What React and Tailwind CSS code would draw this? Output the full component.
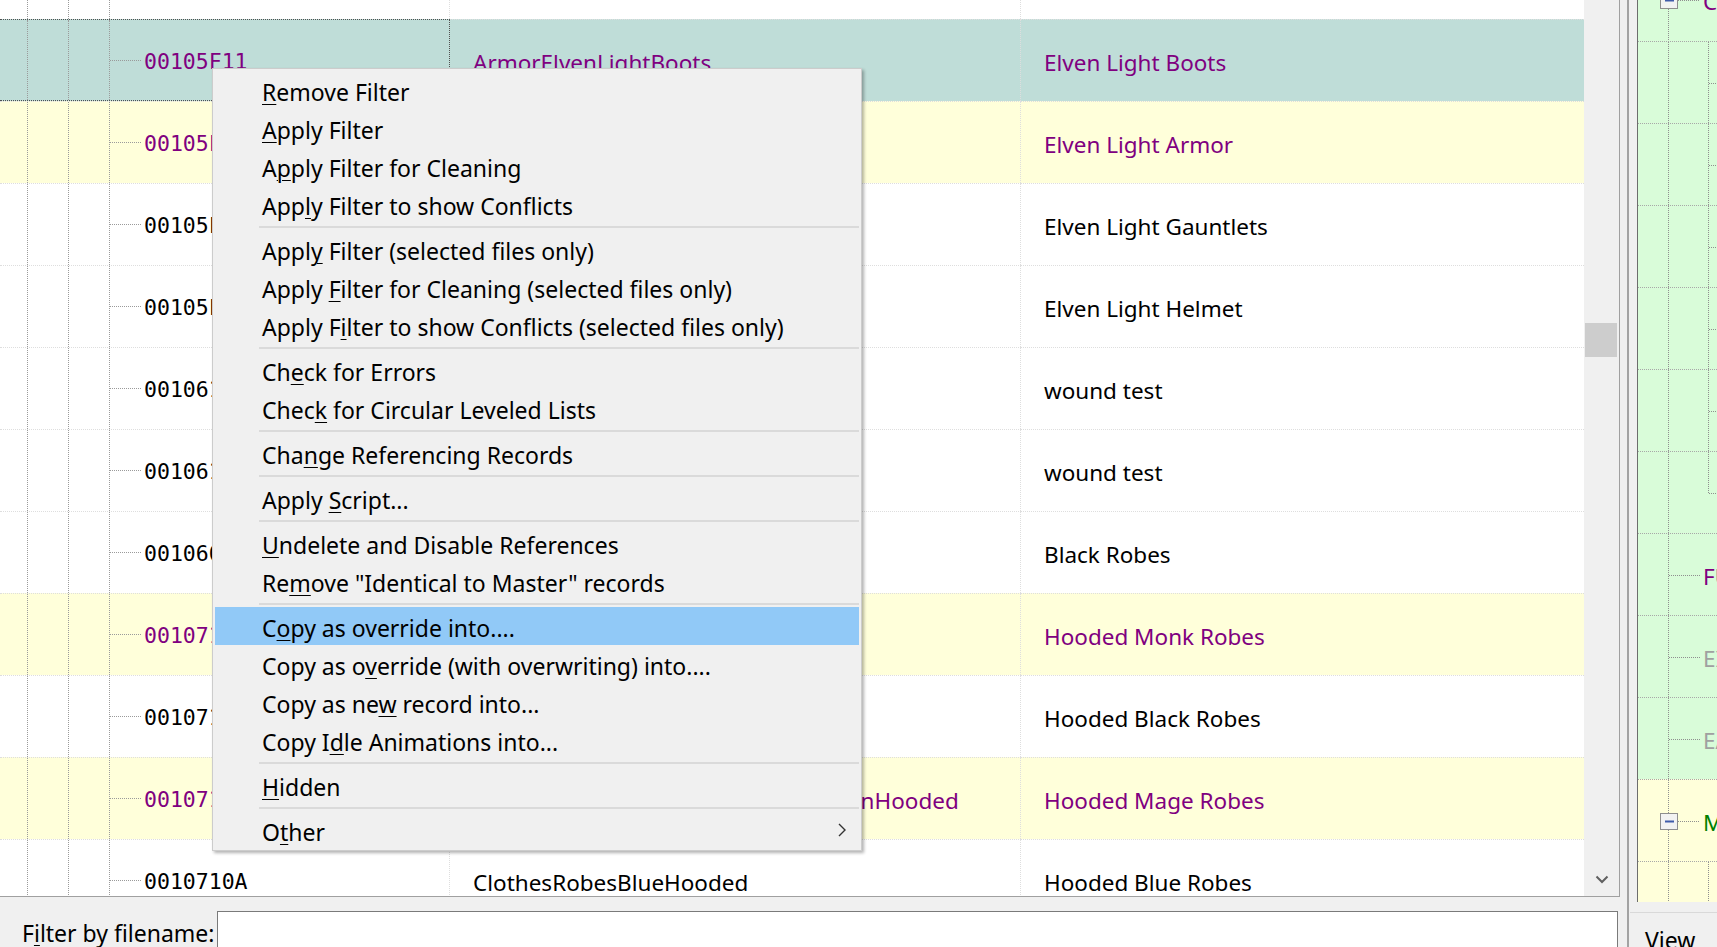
import React from "react";

// Records shown in the main list; the first row is scrolled partly out of view.
const records = [
  { id: "00105F10", edid: "ArmorElvenLightShield", name: "Elven Light Shield", kind: "white" },
  { id: "00105F11", edid: "ArmorElvenLightBoots", name: "Elven Light Boots", kind: "sel" },
  { id: "00105F12", edid: "ArmorElvenLightCuirass", name: "Elven Light Armor", kind: "yellow" },
  { id: "00105F13", edid: "ArmorElvenLightGauntlets", name: "Elven Light Gauntlets", kind: "white" },
  { id: "00105F14", edid: "ArmorElvenLightHelmet", name: "Elven Light Helmet", kind: "white" },
  { id: "0010613E", edid: "WoundTest01", name: "wound test", kind: "white" },
  { id: "0010613F", edid: "WoundTest02", name: "wound test", kind: "white" },
  { id: "001060E1", edid: "ClothesRobesBlack", name: "Black Robes", kind: "white" },
  { id: "00107106", edid: "ClothesMonkRobesHooded", name: "Hooded Monk Robes", kind: "yellow" },
  { id: "00107107", edid: "ClothesRobesBlackHooded", name: "Hooded Black Robes", kind: "white" },
  { id: "00107108", edid: "ClothesRobesMageApprenticeMaroonHooded", name: "Hooded Mage Robes", kind: "yellow" },
  { id: "0010710A", edid: "ClothesRobesBlueHooded", name: "Hooded Blue Robes", kind: "white" },
];

// Context menu entries: [label, index of access key, highlighted, has submenu]
const menu = [
  ["Remove Filter", 0],
  ["Apply Filter", 0],
  ["Apply Filter for Cleaning", 1],
  ["Apply Filter to show Conflicts", 3],
  "-",
  ["Apply Filter (selected files only)", 4],
  ["Apply Filter for Cleaning (selected files only)", 6],
  ["Apply Filter to show Conflicts (selected files only)", 7],
  "-",
  ["Check for Errors", 2],
  ["Check for Circular Leveled Lists", 4],
  "-",
  ["Change Referencing Records", 3],
  "-",
  ["Apply Script...", 6],
  "-",
  ["Undelete and Disable References", 0],
  ['Remove "Identical to Master" records', 2],
  "-",
  ["Copy as override into....", 1, true],
  ["Copy as override (with overwriting) into....", 9],
  ["Copy as new record into...", 10],
  ["Copy Idle Animations into...", 6],
  "-",
  ["Hidden", 0],
  "-",
  ["Other", 1, false, true],
];

// Navigation tree rows on the right-hand side
const navRows = [
  { bg: "green", box: true, v30: "below", text: "CLOTH", color: "text-[#800080]" },
  { bg: "green", v30: "full", v70: "full" },
  { bg: "green", v30: "full", v70: "full" },
  { bg: "green", v30: "full", v70: "full" },
  { bg: "green", v30: "full", v70: "full" },
  { bg: "green", v30: "full", v70: "full" },
  { bg: "green", v30: "full", v70: "half" },
  { bg: "green", v30: "full", t30: true, text: "FURN", color: "text-[#800080]" },
  { bg: "green", v30: "full", t30: true, text: "EIDL", color: "text-[#a0a0a0]" },
  { bg: "green", v30: "full", t30: true, text: "EAST", color: "text-[#a0a0a0]" },
  { bg: "yellow", box: true, v30: "full", text: "MISC", color: "text-[#008000]" },
  { bg: "yellow", v30: "full", v70: "full" },
];

function AccessKey({ text, k }) {
  return (
    <>
      {text.slice(0, k)}
      <span className="underline decoration-1 underline-offset-[3px]">{text[k]}</span>
      {text.slice(k + 1)}
    </>
  );
}

function RecordRow({ r, first }) {
  const sel = r.kind === "sel";
  const bg = sel ? "bg-[#bfddd8]" : r.kind === "yellow" ? "bg-[#ffffda]" : "bg-white";
  const fg = r.kind === "white" ? "text-black" : "text-[#800080]";
  const top = first ? "" : "border-t";
  const col1 = sel
    ? "border-y border-r border-dotted border-[#505050]"
    : `border-r border-dotted border-[#dedede] ${top}`;
  return (
    <div className={`flex h-[82px] shrink-0 ${bg} ${fg} ${first ? "-mt-[63px]" : ""}`}>
      <div className={`flex w-[450px] shrink-0 ${col1}`}>
        <div className="w-[27px] shrink-0" />
        <div className="w-[41px] shrink-0 border-l border-dotted border-[#9a9a9a]" />
        <div className="w-[41px] shrink-0 border-l border-dotted border-[#9a9a9a]" />
        <div className="flex w-[35px] shrink-0 items-center border-l border-dotted border-[#9a9a9a]">
          <div className="h-0 w-[31px] border-t border-dotted border-[#9a9a9a]" />
        </div>
        <div className="flex items-center whitespace-nowrap pt-[4px] font-['DejaVu_Sans_Mono','Liberation_Mono',monospace] text-[21.5px]">
          {r.id}
        </div>
      </div>
      <div
        className={`flex w-[571px] shrink-0 items-center overflow-hidden whitespace-nowrap border-r border-dotted border-[#dedede] pl-[23px] pt-[5px] ${top}`}
      >
        {r.edid}
      </div>
      <div className={`flex flex-1 items-center whitespace-nowrap border-dotted border-[#dedede] pl-[23px] pt-[5px] ${top}`}>
        {r.name}
      </div>
    </div>
  );
}

function NavRow({ row, first }) {
  const bg = row.bg === "green" ? "bg-[#d9fcd9]" : "bg-[#ffffda]";
  const dot = { stroke: "#8f8f8f", strokeDasharray: "1 1", shapeRendering: "crispEdges" };
  return (
    <div
      className={`relative flex h-[82px] shrink-0 items-center pt-[4px] ${bg} ${
        first ? "-mt-[41px]" : "border-t border-dotted border-[#a8a8a8]"
      }`}
    >
      <svg className="absolute left-0 top-0" width="80" height="82">
        {row.v30 === "full" && !row.box && <line x1="30.5" y1="0" x2="30.5" y2="82" {...dot} />}
        {row.v30 === "full" && row.box && (
          <>
            <line x1="30.5" y1="0" x2="30.5" y2="33" {...dot} />
            <line x1="30.5" y1="50" x2="30.5" y2="82" {...dot} />
          </>
        )}
        {row.v30 === "below" && <line x1="30.5" y1="50" x2="30.5" y2="82" {...dot} />}
        {row.v70 === "full" && <line x1="70.5" y1="0" x2="70.5" y2="82" {...dot} />}
        {row.v70 === "half" && <line x1="70.5" y1="0" x2="70.5" y2="41" {...dot} />}
        {row.v70 && <line x1="71" y1="41.5" x2="80" y2="41.5" {...dot} />}
        {row.t30 && <line x1="31" y1="41.5" x2="62" y2="41.5" {...dot} />}
        {row.box && (
          <>
            <line x1="40" y1="41.5" x2="62" y2="41.5" {...dot} />
            <rect x="22.5" y="33.5" width="17" height="16" fill="#f2f2f2" stroke="#8e8e8e" />
            <rect x="27" y="40.5" width="9" height="2" fill="#3f5ba9" />
          </>
        )}
      </svg>
      {row.text && <div className={`relative whitespace-nowrap pl-[65px] ${row.color}`}>{row.text}</div>}
    </div>
  );
}

export default function App() {
  return (
    <div className="relative flex h-[947px] w-[1717px] overflow-hidden bg-[#f0f0f0] font-['Noto_Sans','Open_Sans',sans-serif] text-[22.5px] text-black">
      {/* record list and filename filter */}
      <div className="flex w-[1620px] shrink-0 flex-col">
        <div className="flex h-[897px] shrink-0 border-b border-r border-[#a0a0a0]">
          <div className="flex w-[1584px] shrink-0 flex-col overflow-hidden bg-white">
            {records.map((r, i) => (
              <RecordRow key={r.id} r={r} first={i === 0} />
            ))}
          </div>
          <div className="flex w-[35px] shrink-0 flex-col bg-[#f0f0f0]">
            <div className="h-[323px] shrink-0" />
            <div className="ml-[1px] mr-[2px] h-[34px] shrink-0 bg-[#cdcdcd]" />
            <div className="flex-1" />
            <div className="flex h-[34px] shrink-0 items-center justify-center">
              <svg width="14" height="9" viewBox="0 0 14 9">
                <polyline points="1.5,1.5 7,7 12.5,1.5" fill="none" stroke="#606060" strokeWidth="2" />
              </svg>
            </div>
          </div>
        </div>
        <div className="flex flex-1 pl-[22px] pt-[14px] text-[23px]">
          <div className="w-[195px] shrink-0 whitespace-nowrap pt-[7px] leading-[30px]">
            <AccessKey text="Filter by filename:" k={1} />
          </div>
          <div className="mr-[2px] h-[60px] flex-1 border border-[#7a7a7a] bg-white" />
        </div>
      </div>

      {/* splitter */}
      <div className="w-[7px] shrink-0" />
      <div className="w-[2px] shrink-0 bg-[#a3a3a3]" />

      {/* navigation tree */}
      <div className="flex w-[88px] shrink-0 flex-col">
        <div className="flex h-[902px] shrink-0">
          <div className="w-[8px] shrink-0" />
          <div className="flex w-[80px] shrink-0 flex-col overflow-hidden border-l border-[#6d6d6d]">
            {navRows.map((row, i) => (
              <NavRow key={i} row={row} first={i === 0} />
            ))}
          </div>
        </div>
        <div className="ml-[1px] mt-[10px] border-t border-[#d9d9d9] pl-[15px] pt-[12px] text-[23px] leading-[30px]">View</div>
      </div>

      {/* context menu */}
      <div className="absolute left-[212px] top-[68px] w-[650px] border border-[#cccccc] bg-[#f0f0f0] px-[2px] pb-[1px] pt-[2px] text-[23px] shadow-[2px_2px_3px_rgba(0,0,0,0.3)]">
        {menu.map((m, i) =>
          m === "-" ? (
            <div key={i} className="flex h-[7px] items-center pl-[44px]">
              <div className="h-[2px] flex-1 bg-[#dadada]" />
            </div>
          ) : (
            <div
              key={i}
              className={`flex h-[38px] items-center justify-between pl-[47px] pr-[13px] pt-[5px] ${m[2] ? "bg-[#91c9f7]" : ""}`}
            >
              <span className="whitespace-nowrap">
                <AccessKey text={m[0]} k={m[1]} />
              </span>
              {m[3] && (
                <svg width="8" height="14" viewBox="0 0 8 14" className="-mt-[5px]">
                  <polyline points="1,1 7,7 1,13" fill="none" stroke="#333333" strokeWidth="1.4" />
                </svg>
              )}
            </div>
          )
        )}
      </div>
    </div>
  );
}
